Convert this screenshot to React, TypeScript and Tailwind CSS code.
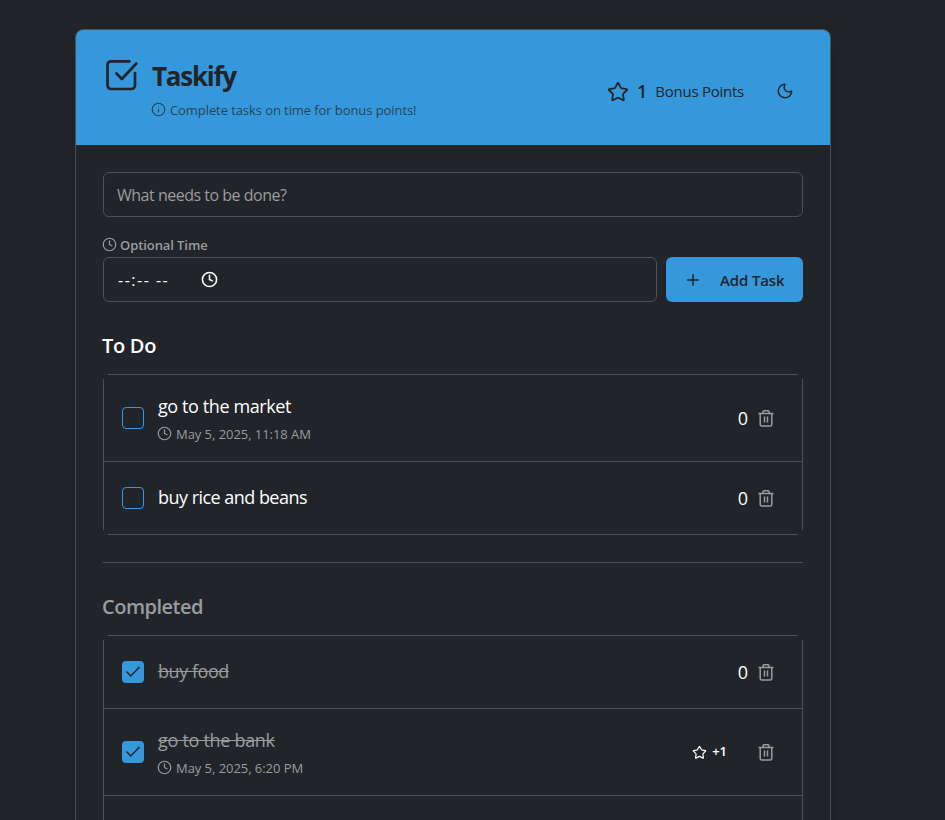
import { Star, Moon, Clock, Info, Plus } from "lucide-react";
import type { ReactNode } from "react";

const Trash = () => (
  <svg viewBox="0 0 18 18" className="-mt-px h-[18px] w-[18px] shrink-0 text-[#9a9c9d]" fill="none" stroke="currentColor" strokeWidth="1.5">
    <path d="M1.5 4.5h15M6 4.300V3a1.200 1.200 0 0 1 1.200-1.200h3.600A1.200 1.200 0 0 1 12 3v1.300M3.200 4.600V15.500a1.500 1.500 0 0 0 1.500 1.500h8.600a1.500 1.500 0 0 0 1.500-1.500V4.600" />
    <path d="M7.500 7.500v6M10.500 7.500v6" />
  </svg>
);

const CheckSquare = () => (
  <svg viewBox="0 0 32 32" className="mt-[29px] h-8 w-8 shrink-0" fill="none" stroke="currentColor" strokeWidth="2.700" strokeLinecap="round" strokeLinejoin="round">
    <path d="M23.500 2.400H4.900a3.400 3.400 0 0 0-3.400 3.400v20.800A3.400 3.400 0 0 0 4.900 30h20.700a3.400 3.400 0 0 0 3.400-3.400V14" />
    <path d="M10.500 14.500 15.800 20 30.300 4.500" />
  </svg>
);

const SmallClock = () => <Clock className="-ml-px -mt-[3px] mr-[4px] h-[15px] w-[15px] shrink-0" strokeWidth={1.9} />;

type Task = { title: string; time?: string; points?: string; done?: boolean; track: string };

function Row({ task }: { task: Task }) {
  return (
    <li className={`flex shrink-0 items-center border-b border-[#495057] pl-[18px] pr-[27px] last:border-b-0 ${task.time ? "h-[87px]" : "h-[73px] last:h-[72px]"}`}>
      <span className={`flex h-[22px] w-[22px] shrink-0 items-center justify-center rounded ${task.done ? "bg-[#3498db] text-[#212529]" : "border border-[#3498db]"}`}>
        {task.done && (
          <svg viewBox="0 0 22 22" className="h-[22px] w-[22px]" fill="none" stroke="currentColor" strokeWidth="1.500"><path d="M4.500 10.500 8.800 15 17.500 6" /></svg>
        )}
      </span>
      <div className={`ml-[14px] grow whitespace-nowrap ${task.time ? "pt-[3px]" : "-mt-px"}`}>
        <div className={`text-[18px] leading-[27px] ${task.track} ${task.done ? "text-[#9a9c9d] line-through decoration-1" : "text-white"}`}>{task.title}</div>
        {task.time && (
          <div className="mt-[4px] flex h-[22px] items-center text-[13px] text-[#9a9c9d]">
            <SmallClock />
            <span className="tracking-[-0.050px]">{task.time}</span>
          </div>
        )}
      </div>
      {task.points ? (
        <span className="mr-[30px] flex items-center text-[13px] font-semibold text-white">
          <Star className="mr-[5px] h-[15px] w-[15px]" strokeWidth={1.9} />
          <span>{task.points}</span>
        </span>
      ) : (
        <span className="mr-[9px] text-[18px] text-white">0</span>
      )}
      <Trash />
    </li>
  );
}

function List({ children }: { children: ReactNode }) {
  return (
    <div className="relative border border-[#495057]">
      <ul>{children}</ul>
      <i className="absolute -left-px -top-px h-[5px] w-[5px] bg-[#212529]" />
      <i className="absolute -right-px -top-px h-[5px] w-[5px] bg-[#212529]" />
      <i className="absolute -bottom-px -left-px h-[5px] w-[5px] bg-[#212529]" />
      <i className="absolute -bottom-px -right-px h-[5px] w-[5px] bg-[#212529]" />
    </div>
  );
}

export default function App() {
  return (
    <div className="h-[820px] overflow-hidden bg-[#212529] pl-[75px] pt-[29px] font-['Open_Sans','Noto_Sans',sans-serif]">
      <div className="h-[900px] w-[756px] overflow-hidden rounded-t-lg border border-[#495057] shadow-[0_8px_16px_rgba(0,0,0,0.15)]">
        <header className="flex h-[115px] bg-[#3498db] pl-[30px] pr-[36px] text-[#212529]">
          <CheckSquare />
          <div className="ml-[14px] mt-[28px] grow whitespace-nowrap">
            <h1 className="text-[26px] font-bold leading-[36px] tracking-[-1.250px]">Taskify</h1>
            <p className="mt-[6px] flex h-[22px] items-center text-[13px] text-[#212529]/75">
              <Info className="-ml-px -mt-[3px] mr-[4px] h-[15px] w-[15px]" strokeWidth={1.9} />
              <span className="tracking-[-0.080px]">Complete tasks on time for bonus points!</span>
            </p>
          </div>
          <div className="flex items-center whitespace-nowrap pt-[8px]">
            <Star className="mr-[8px] h-[22px] w-[22px]" strokeWidth={2} />
            <b className="mr-[8px] text-[18px] font-semibold">1</b>
            <span className="text-[15px] tracking-[-0.250px]">Bonus Points</span>
            <Moon className="-mt-px ml-[32px] h-[18px] w-[18px]" strokeWidth={1.9} />
          </div>
        </header>
        <main className="px-[27px] pt-[27px]">
          <div className="flex h-[45px] items-center rounded-md border border-[#495057] px-[13px] text-[16px] text-[#9a9c9d]"><span className="tracking-[-0.490px]">What needs to be done?</span></div>
          <div className="mt-[17px] flex h-[23px] items-center text-[13px] font-semibold text-[#9a9c9d]"><SmallClock /><span className="-ml-px tracking-[-0.080px]">Optional Time</span></div>
          <div className="flex gap-[9px]">
            <div className="flex h-[45px] grow items-center rounded-md border border-[#495057] px-[14px] text-[16px] text-white"><span className="w-[83px] shrink-0 whitespace-nowrap tracking-[1.500px]">--:-- --</span><Clock className="h-[17px] w-[17px]" strokeWidth={2.200} /></div>
            <button className="flex h-[45px] w-[137px] items-center whitespace-nowrap rounded-md bg-[#3498db] pl-[18px] text-[15px] font-semibold text-[#212529]"><Plus className="mr-[18px] h-[18px] w-[18px]" strokeWidth={2} /><span className="pt-px tracking-[-0.150px]">Add Task</span></button>
          </div>
          <h2 className="-ml-px mt-[30px] h-[42px] text-[20px] font-semibold leading-[28px] tracking-[-0.300px] text-white">To Do</h2>
          <List>
            <Row task={{ title: "go to the market", time: "May 5, 2025, 11:18 AM", track: "tracking-[-0.400px]" }} />
            <Row task={{ title: "buy rice and beans", track: "tracking-[-0.530px]" }} />
          </List>
          <hr className="mt-[27px] border-[#495057]" />
          <h2 className="-ml-px mt-[30px] h-[42px] text-[20px] font-semibold leading-[28px] tracking-[-0.500px] text-[#9a9c9d]">Completed</h2>
          <List>
            <Row task={{ title: "buy food", done: true, track: "tracking-[-0.450px]" }} />
            <Row task={{ title: "go to the bank", done: true, time: "May 5, 2025, 6:20 PM", points: "+1", track: "tracking-[-0.300px]" }} />
            <li className="h-[73px]" />
          </List>
        </main>
      </div>
    </div>
  );
}
